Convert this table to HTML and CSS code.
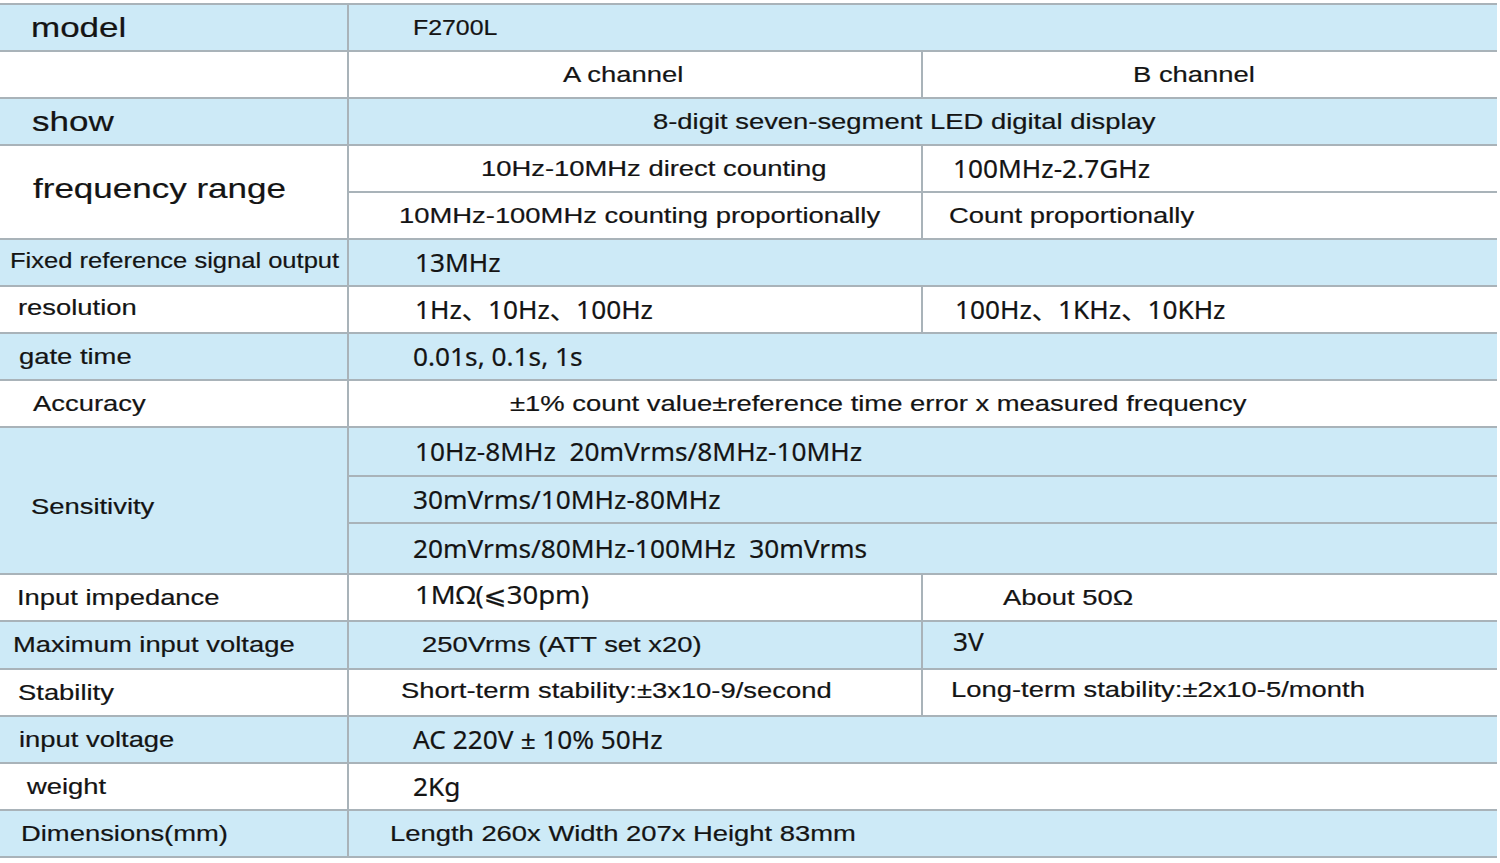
FILE: index.html
```html
<!DOCTYPE html>
<html lang="en">
<head>
<meta charset="utf-8">
<title>F2700L specifications</title>
<link rel="stylesheet" href="styles.css">
</head>
<body>
<div class="spec">
  <div class="cell blue pl-31"><span class="t th">model</span></div>
  <div class="cell blue span2 pl-64"><span class="t tm">F2700L</span></div>

  <div class="cell white"></div>
  <div class="cell white pl-214"><span class="t">A channel</span></div>
  <div class="cell white pl-210"><span class="t">B channel</span></div>

  <div class="cell blue pl-32"><span class="t th">show</span></div>
  <div class="cell blue span2 pl-304"><span class="t">8-digit seven-segment LED digital display</span></div>

  <div class="cell white rows2 pl-33 up-3"><span class="t th">frequency range</span></div>
  <div class="cell white pl-132"><span class="t">10Hz-10MHz direct counting</span></div>
  <div class="cell white pl-30"><span class="t tn">100MHz-2.7GHz</span></div>
  <div class="cell white pl-50"><span class="t">10MHz-100MHz counting proportionally</span></div>
  <div class="cell white pl-26"><span class="t">Count proportionally</span></div>

  <div class="cell blue pl-10 up-2"><span class="t tsq">Fixed reference signal output</span></div>
  <div class="cell blue span2 pl-66"><span class="t tn">13MHz</span></div>

  <div class="cell white pl-18 up-2"><span class="t">resolution</span></div>
  <div class="cell white pl-66"><span class="t tn">1Hz、10Hz、100Hz</span></div>
  <div class="cell white pl-32"><span class="t tn">100Hz、1KHz、10KHz</span></div>

  <div class="cell blue pl-19"><span class="t">gate time</span></div>
  <div class="cell blue span2 pl-64"><span class="t tn">0.01s, 0.1s, 1s</span></div>

  <div class="cell white pl-33"><span class="t">Accuracy</span></div>
  <div class="cell white span2 pl-161"><span class="t">±1% count value±reference time error x measured frequency</span></div>

  <div class="cell blue rows3 pl-31 low-6"><span class="t">Sensitivity</span></div>
  <div class="cell blue span2 pl-66"><span class="t tn">10Hz-8MHz&nbsp;&nbsp;20mVrms/8MHz-10MHz</span></div>
  <div class="cell blue span2 pl-64"><span class="t tn">30mVrms/10MHz-80MHz</span></div>
  <div class="cell blue span2 pl-64"><span class="t tn">20mVrms/80MHz-100MHz&nbsp;&nbsp;30mVrms</span></div>

  <div class="cell white pl-17"><span class="t">Input impedance</span></div>
  <div class="cell white pl-66 up-3"><span class="t tn tw">1MΩ(⩽30pm)</span></div>
  <div class="cell white pl-80"><span class="t">About 50Ω</span></div>

  <div class="cell blue pl-13"><span class="t">Maximum input voltage</span></div>
  <div class="cell blue pl-73"><span class="t">250Vrms (ATT set x20)</span></div>
  <div class="cell blue pl-30 up-4"><span class="t tn">3V</span></div>

  <div class="cell white pl-18"><span class="t">Stability</span></div>
  <div class="cell white pl-52 up-2"><span class="t">Short-term stability:±3x10-9/second</span></div>
  <div class="cell white pl-28 up-3"><span class="t">Long-term stability:±2x10-5/month</span></div>

  <div class="cell blue pl-19"><span class="t">input voltage</span></div>
  <div class="cell blue span2 pl-64"><span class="t tn">AC 220V<span class="pm">±</span>10% 50Hz</span></div>

  <div class="cell white pl-27"><span class="t">weight</span></div>
  <div class="cell white span2 pl-64"><span class="t tn">2Kg</span></div>

  <div class="cell blue pl-21"><span class="t">Dimensions(mm)</span></div>
  <div class="cell blue span2 pl-41"><span class="t">Length 260x Width 207x Height 83mm</span></div>
</div>
</body>
</html>
```

FILE: styles.css
```css
html, body {
  margin: 0;
  padding: 0;
  background: #ffffff;
}

body {
  font-family: "Liberation Sans", Arial, sans-serif;
  color: #141414;
}

.spec {
  margin-top: 3px;
  width: 1497px;
  padding: 2px 0;
  background: #a9b3b9;
  display: grid;
  grid-template-columns: 347px 572px 574px;
  grid-template-rows: 45px 45px 45px 45px 45px 45px 45px 45px 45px 47px 45px 49px 45px 46px 45px 45px 45px 45px;
  gap: 2px;
}

.cell {
  display: flex;
  align-items: center;
  white-space: nowrap;
  font-size: 22px;
  line-height: 1;
}

.blue { background: #cdeaf7; }
.white { background: #ffffff; }

.span2 { grid-column: span 2; }
.rows2 { grid-row: span 2; }
.rows3 { grid-row: span 3; }

.t {
  display: inline-block;
  position: relative;
  transform: scaleX(1.245);
  transform-origin: left center;
  -webkit-text-stroke: 0.2px currentColor;
}

.th {
  font-size: 28px;
  transform: scaleX(1.25);
}

.tsq { transform: scaleX(1.16); }

.tm { transform: scaleX(1.13); }

.tn {
  font-family: "Noto Sans", "Noto Sans CJK SC", "DejaVu Sans", sans-serif;
  font-size: 25px;
  transform: scaleX(1.05);
}

.tw { transform: scaleX(1.1); }

.pm {
  display: inline-block;
  margin: 0 6px 0 7px;
}

.up-2 .t { top: -2px; }
.up-3 .t { top: -3px; }
.up-4 .t { top: -4px; }
.low-6 .t { top: 6px; }

.pl-10 { padding-left: 10px; }
.pl-13 { padding-left: 13px; }
.pl-17 { padding-left: 17px; }
.pl-18 { padding-left: 18px; }
.pl-19 { padding-left: 19px; }
.pl-21 { padding-left: 21px; }
.pl-26 { padding-left: 26px; }
.pl-27 { padding-left: 27px; }
.pl-28 { padding-left: 28px; }
.pl-30 { padding-left: 30px; }
.pl-31 { padding-left: 31px; }
.pl-32 { padding-left: 32px; }
.pl-33 { padding-left: 33px; }
.pl-41 { padding-left: 41px; }
.pl-50 { padding-left: 50px; }
.pl-52 { padding-left: 52px; }
.pl-64 { padding-left: 64px; }
.pl-66 { padding-left: 66px; }
.pl-73 { padding-left: 73px; }
.pl-80 { padding-left: 80px; }
.pl-132 { padding-left: 132px; }
.pl-161 { padding-left: 161px; }
.pl-210 { padding-left: 210px; }
.pl-214 { padding-left: 214px; }
.pl-304 { padding-left: 304px; }
```
